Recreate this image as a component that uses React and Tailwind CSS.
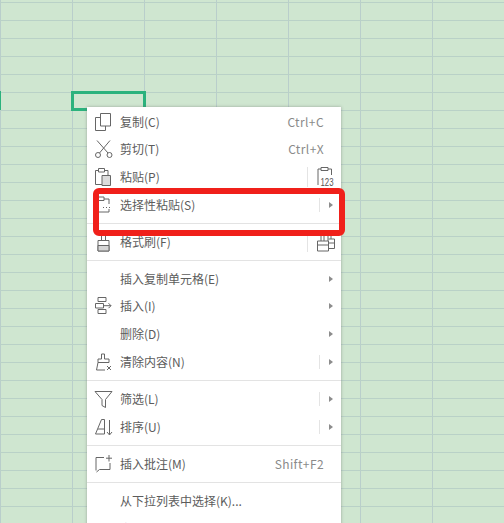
const stroke = {fill: 'none', stroke: '#666666', strokeWidth: 1};

function Icon({children}) {
  return (
    <svg width="20" height="20" viewBox="0 0 20 20" {...stroke}>
      {children}
    </svg>
  );
}

const CopyIcon = () => (
  <Icon>
    <path d="M6.5 5.5H1.5V18.5H11.5V14" />
    <path d="M6.5 1.5H16.5V14H6.5Z" />
  </Icon>
);

const CutIcon = () => (
  <Icon>
    <path d="M3 1.5L14 14M16 1.5L5.5 14" />
    <circle cx="4" cy="16" r="2.5" />
    <circle cx="15.5" cy="16" r="2.5" />
  </Icon>
);

const PasteIcon = () => (
  <Icon>
    <path d="M4.5 3.5H1.5V17.5H8" />
    <path d="M4.5 1.5H10.5V5H4.5Z" />
    <path d="M10.5 3.5H14V8" />
    <path d="M8 8.5H16.5V18.5H8Z" fill="#dcdcdc" />
  </Icon>
);

const PasteSpecialIcon = () => (
  <Icon>
    <path d="M4.5 4H2V17H15V14" />
    <path d="M4.5 2H10V5.5H4.5Z" />
    <path d="M10 4H15V9" />
    <path d="M9 12.5h1M12 12.5h1M15 12.5h1" />
  </Icon>
);

const BrushIcon = () => (
  <Icon>
    <path d="M7.5 3H11.5V8.5H7.5Z" />
    <path d="M4 8.5H15V19H4Z" />
    <path d="M4 13.5H15V19H4Z" fill="#d5d5d5" />
  </Icon>
);

const InsertIcon = () => (
  <Icon>
    <path d="M4 1.5H12V5.5H4Z" />
    <path d="M1.5 7.5H9.5V12H1.5Z" />
    <path d="M4 13.5H12V17.5H4Z" />
    <path d="M9.5 9.7H17M14.5 7.2L17 9.7L14.5 12.2" />
  </Icon>
);

const ClearIcon = () => (
  <Icon>
    <path d="M7.5 2H10.5V7H15V10.5H4V7H7.5Z" />
    <path d="M4 10.5L2.5 18H11" />
    <path d="M13 14L17 18M17 14L13 18" />
  </Icon>
);

const FilterIcon = () => (
  <Icon>
    <path d="M1 2.5H18L11.5 10.5V18.5L8 16.5V10.5Z" />
  </Icon>
);

const SortIcon = () => (
  <Icon>
    <path d="M1.5 17L7.5 2.5H10.5V17H1.5" />
    <path d="M4 12H10.5" />
    <path d="M15.5 3V17.5M13 15L15.5 18L18 15" />
  </Icon>
);

const CommentIcon = () => (
  <Icon>
    <path d="M10 3.5H2V16.5" />
    <path d="M2.5 18L5.5 15.5H16V9" />
    <path d="M15 1V7.5M12 4.2H18" />
  </Icon>
);

const NumbersIcon = () => (
  <svg width="20" height="22" viewBox="0 0 20 22" {...stroke}>
    <path d="M5 3H2V19" />
    <path d="M5 1.5H12V4.5H5Z" />
    <path d="M12 3H15.5V9" />
    <text
      x="4.5"
      y="20"
      fontSize="10"
      textLength="13"
      lengthAdjust="spacingAndGlyphs"
      fill="#555555"
      stroke="none"
      fontFamily="'Liberation Sans', sans-serif"
    >
      123
    </text>
  </svg>
);

const FormatPairIcon = () => (
  <svg width="20" height="20" viewBox="0 0 20 20" {...stroke}>
    <path d="M5 3.5H8V9" />
    <path d="M5 3.5V9" />
    <path d="M12 1H15V7" />
    <path d="M12 1V9" />
    <path d="M1.5 9H12.5V19H1.5Z" />
    <path d="M1.5 13H12.5" />
    <path d="M12.5 7H18.5V16.5H12.5" />
    <path d="M12.5 11H18.5" />
  </svg>
);

const items = [
  {label: '复制(C)', icon: CopyIcon, shortcut: 'Ctrl+C'},
  {label: '剪切(T)', icon: CutIcon, shortcut: 'Ctrl+X'},
  {label: '粘贴(P)', icon: PasteIcon, side: NumbersIcon},
  {label: '选择性粘贴(S)', icon: PasteSpecialIcon, split: true, arrow: true},
  {divider: 'h-[10px]'},
  {label: '格式刷(F)', icon: BrushIcon, side: FormatPairIcon},
  {divider: 'h-[9px]'},
  {label: '插入复制单元格(E)', arrow: true},
  {label: '插入(I)', icon: InsertIcon, arrow: true},
  {label: '删除(D)', arrow: true},
  {label: '清除内容(N)', icon: ClearIcon, split: true, arrow: true},
  {divider: 'h-[10px]'},
  {label: '筛选(L)', icon: FilterIcon, split: true, arrow: true},
  {label: '排序(U)', icon: SortIcon, split: true, arrow: true},
  {divider: 'h-[10px]'},
  {label: '插入批注(M)', icon: CommentIcon, shortcut: 'Shift+F2'},
  {divider: 'h-[9px]'},
  {label: '从下拉列表中选择(K)...'},
  {label: '定义名称(A)...'},
];

function MenuRow({item}) {
  const LeadIcon = item.icon;
  const SideIcon = item.side;
  return (
    <div className="flex h-[27.6px] items-center text-[12px] text-[#5c5c5c]">
      <div className="flex w-[33px] shrink-0 justify-center pl-[1px]">
        {LeadIcon ? <LeadIcon /> : null}
      </div>
      <span className="flex-1">{item.label}</span>
      {item.shortcut ? (
        <span className="pr-[17px] tracking-[0.4px] text-[#8a8a8a]">{item.shortcut}</span>
      ) : null}
      {SideIcon ? (
        <div className="flex h-[20px] w-[34px] items-center justify-end border-l border-[#e4e4e4] pr-[5px]">
          <SideIcon />
        </div>
      ) : null}
      {item.split ? <div className="h-[14px] w-px bg-[#e4e4e4]" /> : null}
      {item.arrow ? (
        <div className="flex w-[21px] justify-center">
          <div className="h-0 w-0 border-y-[3px] border-l-[4px] border-y-transparent border-l-[#8c8c8c]" />
        </div>
      ) : null}
    </div>
  );
}

export default function App() {
  return (
    <div
      className="relative h-[523px] w-[504px] overflow-hidden bg-[#cfe6d0] bg-[linear-gradient(to_bottom,#b9d1c7_1px,transparent_1px),linear-gradient(to_right,#b9cecb_1px,transparent_1px)] bg-[size:72px_18px] bg-[position:0px_2px]"
      style={{fontFamily: "'Noto Sans CJK SC', 'Noto Sans', sans-serif"}}
    >
      {/* row header marker + active cell */}
      <div className="absolute left-0 top-[91px] h-[19px] w-[1px] bg-[#2bb27d]" />
      <div className="absolute left-[71px] top-[91px] h-[20px] w-[75px] border-[3px] border-[#2bb27d]" />

      <div className="absolute left-[87px] top-[107px] w-[254px] bg-white pt-[1px] shadow-[0_0_3px_rgba(90,90,90,0.45)]">
        {items.map((item, i) =>
          item.divider ? (
            <div key={i} className={`flex items-center ${item.divider}`}>
              <div className="h-px w-full bg-[#e3e3e3]" />
            </div>
          ) : (
            <MenuRow key={i} item={item} />
          ),
        )}
      </div>

      <div className="absolute left-[93px] top-[188px] h-[48px] w-[252px] rounded-[6px] border-[6px] border-[#f0201a]" />
    </div>
  );
}
